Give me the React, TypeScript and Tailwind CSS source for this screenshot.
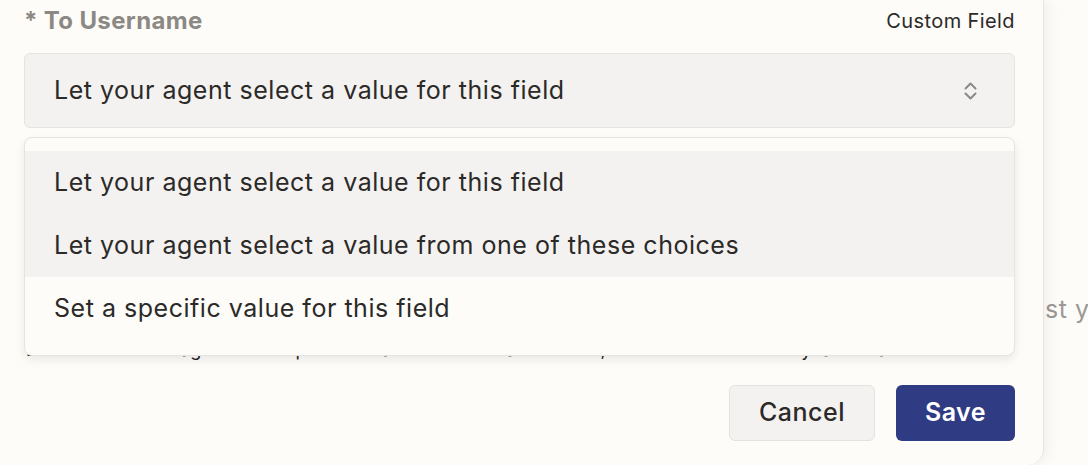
import React from "react";

const options = [
  { label: "Let your agent select a value for this field", active: true },
  { label: "Let your agent select a value from one of these choices", active: true },
  { label: "Set a specific value for this field", active: false },
];

const UpDownIcon: React.FC = () => (
  <svg width="13" height="20" viewBox="0 0 13 20" fill="none" stroke="#8b8885" strokeWidth="2" strokeLinecap="round" strokeLinejoin="round">
    <path d="M1.5 7.5 6.5 2.5l5 5" />
    <path d="M1.5 12.5 6.5 17.5l5-5" />
  </svg>
);

export default function App() {
  return (
    <div className="flex h-[465px] w-full overflow-hidden bg-[#fdfcf8] font-['Inter',sans-serif] text-[#2b2a28]">
      {/* Modal panel */}
      <div className="relative z-10 flex w-[1044px] shrink-0 flex-col rounded-br-2xl border-r border-[#e7e5e1] bg-[#fdfcf8] pl-6 pr-7 shadow-[4px_0_14px_rgba(0,0,0,0.05)]">
        <div className="flex h-[36px] items-end justify-between">
          <span className="text-[24px] font-bold leading-[30px] tracking-[0.015em] text-[#8c8985]">* To Username</span>
          <span className="pb-[2px] text-[20px] leading-[26px] tracking-[0.02em]">Custom Field</span>
        </div>

        <div className="relative mt-[17px]">
          {/* Select */}
          <button className="flex h-[75px] w-full items-center justify-between rounded-md border border-[#e6e3e0] bg-[#f4f2f0] pl-[29px] pr-[37px] text-left text-[25px] tracking-[0.021em]">
            <span className="pt-px">Let your agent select a value for this field</span>
            <UpDownIcon />
          </button>

          {/* Content behind the open menu */}
          <div className="flex h-[257px] flex-col justify-end pb-[23px]">
            <p className="pl-[2px] text-[18px] leading-[24px] text-[#222]">
              Describe how the agent should pick this value when the action runs, <b>or choose a field</b> for dynamic values.
            </p>
          </div>

          {/* Open menu */}
          <div className="absolute left-0 right-0 top-[84px] z-20 rounded-lg border border-[#e6e3e0] bg-[#fdfcf8] pb-[15px] pt-[13px] shadow-[0_4px_10px_rgba(0,0,0,0.08)]">
            {options.map((o) => (
              <div
                key={o.label}
                className={`flex h-[63px] items-center pl-[29px] text-[25px] tracking-[0.021em] ${o.active ? "bg-[#f4f2f0]" : ""}`}
              >
                {o.label}
              </div>
            ))}
          </div>
        </div>

        <div className="flex justify-end gap-[21px]">
          <button className="h-[56px] w-[146px] rounded-md border border-[#e4e1de] bg-[#f4f2f0] text-[25px] font-medium tracking-[0.021em]">
            Cancel
          </button>
          <button className="h-[56px] w-[119px] rounded-md bg-[#2f3b83] text-[25px] font-semibold tracking-[0.02em] text-white">
            Save
          </button>
        </div>
      </div>

      {/* Page behind the modal */}
      <div className="flex-1 overflow-hidden pt-[293px]">
        <p className="whitespace-nowrap pl-px text-[25px] leading-[32px] tracking-[0.02em] text-[#9b9895]">st y</p>
      </div>
    </div>
  );
}
